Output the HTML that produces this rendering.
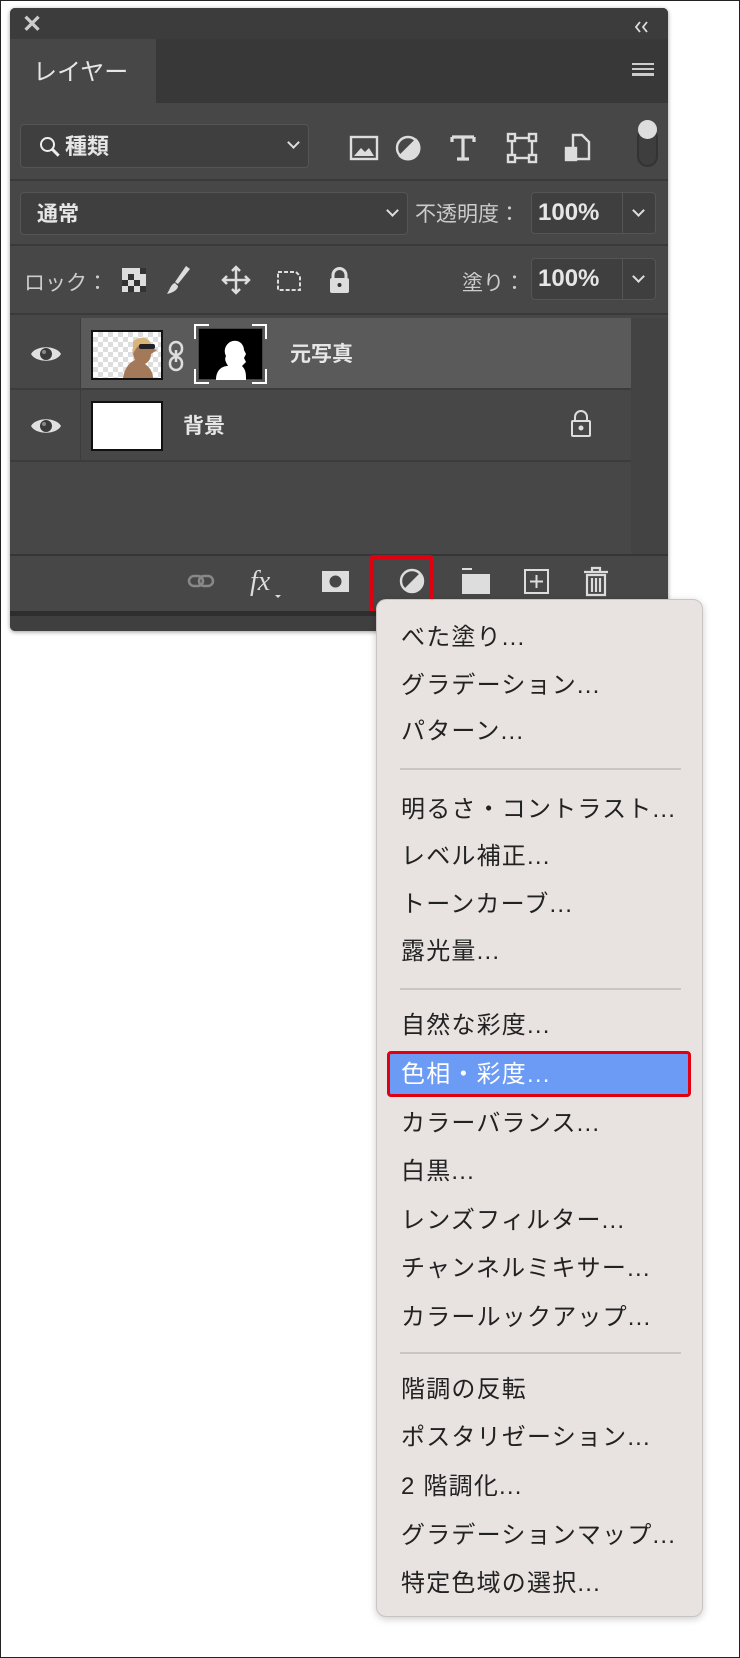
<!DOCTYPE html>
<html><head><meta charset="utf-8"><style>
*{margin:0;padding:0;box-sizing:border-box}
body{width:740px;height:1658px;background:#fff;position:relative;overflow:hidden;font-family:"Liberation Sans","Noto Sans CJK JP",sans-serif}
.frame{position:absolute;left:0;top:0;width:740px;height:1658px;border:1px solid #222}
.a{position:absolute}
.panel{left:10px;top:8px;width:658px;height:623px;background:#474747;border-radius:5px;overflow:hidden;box-shadow:0 1px 4px rgba(0,0,0,.4)}
.t{color:#e6e6e6;position:absolute;white-space:nowrap}
.dd{position:absolute;background:#3f3f3f;border:1px solid #555;border-radius:4px}
.chev{position:absolute;width:9px;height:9px;border-right:2px solid #ddd;border-bottom:2px solid #ddd;transform:rotate(45deg)}
.sep{position:absolute;height:2px;background:#3a3a3a;left:0;width:658px}
.menu{left:376px;top:599px;width:327px;height:1018px;background:#e8e3e1;border:1px solid #c8c4c2;border-radius:10px;box-shadow:0 2px 8px rgba(0,0,0,.2)}
.mi{position:absolute;left:24px;font-size:24px;letter-spacing:1.2px;color:#222;white-space:nowrap;line-height:30px}
.ms{position:absolute;left:23px;width:281px;height:2px;background:#c9c5c3}
</style></head><body>
<div class="a panel">
  <div class="a" style="left:0;top:0;width:658px;height:31px;background:#3c3c3c"></div>
  <div class="t" style="left:12px;top:2px;font-size:24px;font-weight:bold;color:#ccc">✕</div>
  <svg class="a" style="left:624px;top:13px" width="16" height="12" viewBox="0 0 16 12" fill="none" stroke="#ddd" stroke-width="1.8"><path d="M6 1L2 6l4 5M13 1L9 6l4 5"/></svg>
  <div class="a" style="left:0;top:31px;width:658px;height:64px;background:#383838"></div>
  <div class="a" style="left:0;top:31px;width:146px;height:64px;background:#474747"></div>
  <div class="t" style="left:23px;top:44px;font-size:24px">レイヤー</div>
  <div class="a" style="left:622px;top:55px;width:22px;height:13px;border-top:2px solid #ccc;border-bottom:2px solid #ccc"></div>
  <div class="a" style="left:622px;top:60px;width:22px;height:2px;background:#ccc"></div>
  <div class="a" style="left:622px;top:65px;width:22px;height:2px;background:#ccc"></div>

  <div class="dd" style="left:10px;top:116px;width:289px;height:44px"></div>
  <div class="a" style="left:30px;top:129px;width:15px;height:15px;border:2.5px solid #eee;border-radius:50%"></div>
  <div class="a" style="left:41px;top:143px;width:9px;height:3px;background:#eee;transform:rotate(45deg)"></div>
  <div class="t" style="left:55px;top:121px;font-size:22px;font-weight:bold">種類</div>
  <div class="chev" style="left:279px;top:130px"></div>
  <svg class="a" style="left:338px;top:124px" width="264" height="34" viewBox="0 0 264 34" fill="none" stroke="#ddd" stroke-width="2.4">
    <rect x="3" y="5" width="26" height="22"/><path d="M6 24l7-8 4 4 4-4 5 8z" fill="#ddd" stroke="none"/>
    <circle cx="60" cy="16" r="11"/><path d="M52 24L68 8 A11 11 0 0 1 52 24z" fill="#ddd"/>
    <path d="M104 5h22M115 5v22M109 27h12M104 5v5M126 5v5" stroke-width="3.2"/>
    <rect x="164" y="6" width="20" height="20"/><rect x="160" y="2" width="7" height="7" fill="#474747"/><rect x="181" y="2" width="7" height="7" fill="#474747"/><rect x="160" y="23" width="7" height="7" fill="#474747"/><rect x="181" y="23" width="7" height="7" fill="#474747"/>
    <path d="M225 3h9l7 7v17h-16z"/><rect x="218" y="16" width="10" height="12" fill="#ddd"/>
  </svg>
  <div class="a" style="left:627px;top:119px;width:21px;height:40px;border:2px solid #333;border-radius:11px;background:#3e3e3e"></div>
  <div class="a" style="left:628px;top:112px;width:19px;height:19px;border-radius:50%;background:#ddd"></div>

  <div class="sep" style="top:171px"></div>
  <div class="dd" style="left:10px;top:184px;width:388px;height:43px"></div>
  <div class="t" style="left:27px;top:190px;font-size:21px;font-weight:bold">通常</div>
  <div class="chev" style="left:378px;top:198px"></div>
  <div class="t" style="left:405px;top:190px;font-size:21px;color:#ccc">不透明度：</div>
  <div class="dd" style="left:521px;top:184px;width:125px;height:42px"></div>
  <div class="a" style="left:612px;top:184px;width:1px;height:42px;background:#555"></div>
  <div class="t" style="left:528px;top:191px;font-size:24px;font-weight:bold">100%</div>
  <div class="chev" style="left:624px;top:198px"></div>

  <div class="sep" style="top:236px"></div>
  <div class="t" style="left:14px;top:259px;font-size:21px;color:#ccc">ロック：</div>
  <svg class="a" style="left:110px;top:256px" width="240" height="32" viewBox="0 0 240 32">
    <rect x="2" y="4" width="24" height="24" fill="#ddd"/><rect x="8" y="10" width="6" height="6" fill="#333"/><rect x="14" y="16" width="6" height="6" fill="#333"/><rect x="2" y="16" width="6" height="6" fill="#333"/><rect x="20" y="4" width="6" height="6" fill="#333"/><rect x="8" y="22" width="6" height="6" fill="#333"/><rect x="20" y="22" width="6" height="6" fill="#333"/>
    <path d="M66 2L70 5 58 20 55 18z" fill="#ddd"/><path d="M55 19c-4 1-5 6-8 11 5-1 11-4 11-8z" fill="#ddd"/>
    <path d="M116 3v26M103 16h26M112 7l4-4 4 4M112 25l4 4 4-4M107 12l-4 4 4 4M125 12l4 4-4 4" stroke="#ddd" stroke-width="2.5" fill="none"/>
    <path d="M158 8h18l4 4v14h-22z" stroke="#ddd" stroke-width="2" fill="none" stroke-dasharray="4 2"/>
    <rect x="210" y="14" width="19" height="15" rx="2" fill="#ddd"/><path d="M213 15v-4a6.5 6.5 0 0 1 13 0v4" stroke="#ddd" stroke-width="3" fill="none"/><circle cx="219.5" cy="21" r="2" fill="#333"/>
  </svg>
  <div class="t" style="left:452px;top:259px;font-size:21px;color:#ccc">塗り：</div>
  <div class="dd" style="left:521px;top:250px;width:125px;height:42px"></div>
  <div class="a" style="left:612px;top:250px;width:1px;height:42px;background:#555"></div>
  <div class="t" style="left:528px;top:257px;font-size:24px;font-weight:bold">100%</div>
  <div class="chev" style="left:624px;top:264px"></div>

  <div class="sep" style="top:305px"></div>
  <div class="a" style="left:71px;top:310px;width:550px;height:70px;background:#5a5a5a"></div>
  <div class="a" style="left:0;top:380px;width:621px;height:2px;background:#3c3c3c"></div>
  <div class="a" style="left:0;top:452px;width:621px;height:2px;background:#3c3c3c"></div>
  <div class="a" style="left:70px;top:310px;width:1px;height:144px;background:#3c3c3c"></div>
  <svg class="a" style="left:20px;top:335px" width="32" height="22" viewBox="0 0 32 22"><path d="M1 11C6 2 26 2 31 11 26 20 6 20 1 11z" fill="#e0e0e0"/><circle cx="16" cy="11" r="6" fill="#3a3a3a"/><circle cx="14" cy="9" r="2" fill="#888"/></svg>
  <svg class="a" style="left:20px;top:407px" width="32" height="22" viewBox="0 0 32 22"><path d="M1 11C6 2 26 2 31 11 26 20 6 20 1 11z" fill="#e0e0e0"/><circle cx="16" cy="11" r="6" fill="#3a3a3a"/><circle cx="14" cy="9" r="2" fill="#888"/></svg>
  <div class="a" style="left:81px;top:322px;width:72px;height:50px;border:2px solid #111;background:repeating-conic-gradient(#ddd 0 25%,#fff 0 50%) 0 0/10px 10px"></div>
  <svg class="a" style="left:83px;top:324px" width="68" height="46"><path d="M30 46c2-12 8-16 12-18-3-6-4-14 2-18 8-4 14 0 14 6l6 2-6 4c0 4-2 8-6 10 6 4 8 10 8 14z" fill="#a4795a"/><path d="M40 10c4-6 16-6 18 2l-10 0c-4 2-6 6-8 10z" fill="#d9b57a"/><rect x="46" y="12" width="16" height="5" rx="2" fill="#222"/></svg>
  <svg class="a" style="left:157px;top:332px" width="18" height="32" viewBox="0 0 18 32" fill="none" stroke="#ddd" stroke-width="2.5"><rect x="3" y="2" width="12" height="13" rx="6"/><rect x="3" y="17" width="12" height="13" rx="6"/><path d="M9 10v12"/></svg>
  <div class="a" style="left:184px;top:316px;width:73px;height:60px;border:2px solid #fff"></div>
  <div class="a" style="left:199px;top:314px;width:43px;height:64px;background:#5a5a5a"></div>
  <div class="a" style="left:182px;top:331px;width:77px;height:30px;background:#5a5a5a"></div>
  <div class="a" style="left:188px;top:320px;width:65px;height:52px;background:#000;border:1px solid #444"></div>
  <svg class="a" style="left:188px;top:320px" width="65" height="52"><path d="M18 52c0-10 6-14 12-14-2-4-4-6-2-10-2-4-2-10 4-14 8-4 14 2 14 8l2 4-2 4 2 4-4 4c4 4 4 8 4 14z" fill="#fff"/></svg>
  <div class="t" style="left:280px;top:330px;font-size:21px;font-weight:bold">元写真</div>
  <div class="a" style="left:81px;top:393px;width:72px;height:50px;border:2px solid #111;background:#fff"></div>
  <div class="t" style="left:173px;top:402px;font-size:21px;font-weight:bold">背景</div>
  <svg class="a" style="left:560px;top:402px" width="22" height="28" viewBox="0 0 22 28" fill="none" stroke="#ddd" stroke-width="2"><rect x="2" y="11" width="18" height="15" rx="1"/><path d="M5 11V7a6 6 0 0 1 12 0v4"/><circle cx="11" cy="18" r="1.5" fill="#ddd"/></svg>

  <div class="a" style="left:621px;top:310px;width:37px;height:237px;background:#434343"></div>
  <div class="a" style="left:0;top:546px;width:658px;height:2px;background:#363636"></div>
  <svg class="a" style="left:170px;top:556px" width="450" height="36" viewBox="0 0 450 36">
    <g fill="none" stroke="#888" stroke-width="2.5"><rect x="9" y="12" width="14" height="10" rx="5"/><rect x="19" y="12" width="14" height="10" rx="5"/></g>
    <text x="70" y="26" font-family="Liberation Serif,serif" font-style="italic" font-size="28" fill="#ddd">fx</text><path d="M95 31h6l-3 3z" fill="#ddd"/>
    <rect x="142" y="7" width="27" height="21" fill="#ddd"/><circle cx="155.5" cy="17.5" r="6" fill="#474747"/>
    <circle cx="232" cy="17" r="11" fill="none" stroke="#ddd" stroke-width="2.4"/><path d="M224 25L240 9A11 11 0 0 1 224 25z" fill="#ddd"/>
    <path d="M282 5h10" stroke="#ddd" stroke-width="2"/><rect x="282" y="10" width="28" height="20" fill="#ddd"/>
    <rect x="345" y="6" width="23" height="23" fill="none" stroke="#ddd" stroke-width="2"/><path d="M356.5 11v13M350 17.5h13" stroke="#ddd" stroke-width="2"/>
    <path d="M404 8h24M412 8V4h8v4M407 11h18v20h-18zM412 14v14M416 14v14M420 14v14" fill="none" stroke="#ddd" stroke-width="2.2"/>
  </svg>
  <div class="a" style="left:360px;top:547px;width:63px;height:59px;border:4px solid #e00010;border-radius:3px"></div>
  <div class="a" style="left:0;top:603px;width:658px;height:5px;background:#2e2e2e"></div>
  <div class="a" style="left:0;top:608px;width:658px;height:15px;background:#3f3f3f"></div>
</div>

<div class="a menu">
  <div class="mi" style="top:23px">べた塗り...</div>
  <div class="mi" style="top:71px">グラデーション...</div>
  <div class="mi" style="top:117px">パターン...</div>
  <div class="ms" style="top:168px"></div>
  <div class="mi" style="top:195px">明るさ・コントラスト...</div>
  <div class="mi" style="top:242px">レベル補正...</div>
  <div class="mi" style="top:290px">トーンカーブ...</div>
  <div class="mi" style="top:337px">露光量...</div>
  <div class="ms" style="top:388px"></div>
  <div class="mi" style="top:411px">自然な彩度...</div>
  <div class="a" style="left:10px;top:451px;width:304px;height:46px;background:#6b9bf5;border:3px solid #e00010;border-radius:4px"></div>
  <div class="mi" style="top:460px;color:#fff">色相・彩度...</div>
  <div class="mi" style="top:509px">カラーバランス...</div>
  <div class="mi" style="top:557px">白黒...</div>
  <div class="mi" style="top:606px">レンズフィルター...</div>
  <div class="mi" style="top:654px">チャンネルミキサー...</div>
  <div class="mi" style="top:703px">カラールックアップ...</div>
  <div class="ms" style="top:752px"></div>
  <div class="mi" style="top:775px">階調の反転</div>
  <div class="mi" style="top:823px">ポスタリゼーション...</div>
  <div class="mi" style="top:872px">2 階調化...</div>
  <div class="mi" style="top:921px">グラデーションマップ...</div>
  <div class="mi" style="top:969px">特定色域の選択...</div>
</div>
<div class="frame"></div>
</body></html>
